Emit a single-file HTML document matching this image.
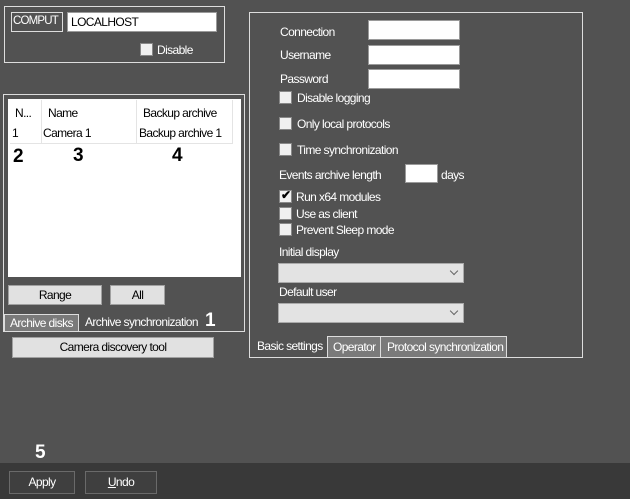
<!DOCTYPE html>
<html><head><meta charset="utf-8"><style>
body{margin:0;width:630px;height:499px;background:#525252;position:relative;overflow:hidden;font-family:"Liberation Sans",sans-serif;font-size:12px;letter-spacing:-0.6px;color:#fff}
div,span{position:absolute;box-sizing:border-box}
.t{white-space:nowrap;line-height:14px}
.k{color:#000}
.btn{background:#e1e1e1;border:1px solid #a0a0a0;color:#000;text-align:center;line-height:18px}
.inp{background:#fff;border:1px solid #9a9a9a}
.cb{width:13px;height:13px;background:#f0f0f0;border:1px solid #888}
.big{font-weight:bold;font-size:19px;letter-spacing:0}
.combo{background:#e3e3e3;border:1px solid #aaa}
.combo:after{content:"";position:absolute;right:6px;top:4px;width:5px;height:5px;border-right:1px solid #666;border-bottom:1px solid #666;transform:rotate(45deg)}
</style></head><body>
<div style="left:4px;top:6px;width:221px;height:57px;border:1px solid #ddd"></div>
<div class="t" style="left:11px;top:12px;width:52px;height:20px;border:1px solid #ddd;line-height:17px;padding-left:1px;font-size:11.5px;letter-spacing:-0.8px">COMPUT</div>
<div class="inp k t" style="left:67px;top:12px;width:150px;height:20px;padding:2px 3px">LOCALHOST</div>
<div class="cb" style="left:140px;top:43px"></div>
<div class="t" style="left:157px;top:43px">Disable</div>

<div style="left:3px;top:94px;width:242px;height:238px;border:1px solid #ddd"></div>
<div style="left:8px;top:99px;width:233px;height:178px;background:#fff"></div>
<div style="left:41px;top:100px;width:1px;height:43px;background:#e4e4e4"></div>
<div style="left:136px;top:100px;width:1px;height:43px;background:#e4e4e4"></div>
<div style="left:232px;top:100px;width:1px;height:43px;background:#e4e4e4"></div>
<div style="left:10px;top:143px;width:223px;height:1px;background:#e4e4e4"></div>
<div class="t k" style="left:15px;top:106px">N...</div>
<div class="t k" style="left:48px;top:106px">Name</div>
<div class="t k" style="left:143px;top:106px">Backup archive</div>
<div class="t k" style="left:12px;top:126px">1</div>
<div class="t k" style="left:43px;top:126px">Camera 1</div>
<div class="t k" style="left:139px;top:126px">Backup archive 1</div>
<div class="t k big" style="left:13px;top:147px;line-height:20px">2</div>
<div class="t k big" style="left:73px;top:146px;line-height:20px">3</div>
<div class="t k big" style="left:172px;top:146px;line-height:20px">4</div>
<div class="btn" style="left:8px;top:285px;width:94px;height:20px">Range</div>
<div class="btn" style="left:110px;top:285px;width:55px;height:20px">All</div>
<div class="t" style="left:4px;top:314px;width:75px;height:18px;background:#7a7a7a;border:1px solid #ddd;line-height:16px;padding-left:5px">Archive disks</div>
<div class="t" style="left:85px;top:315px">Archive synchronization</div>
<div class="t big" style="left:205px;top:311px;line-height:20px">1</div>
<div class="btn" style="left:12px;top:337px;width:202px;height:21px">Camera discovery tool</div>

<div style="left:249px;top:12px;width:334px;height:346px;border:1px solid #ddd"></div>
<div class="t" style="left:280px;top:25px">Connection</div>
<div class="inp" style="left:368px;top:20px;width:92px;height:20px"></div>
<div class="t" style="left:280px;top:48px">Username</div>
<div class="inp" style="left:368px;top:45px;width:92px;height:20px"></div>
<div class="t" style="left:280px;top:72px">Password</div>
<div class="inp" style="left:368px;top:69px;width:92px;height:20px"></div>
<div class="cb" style="left:279px;top:91px"></div><div class="t" style="left:297px;top:91px">Disable logging</div>
<div class="cb" style="left:279px;top:117px"></div><div class="t" style="left:297px;top:117px">Only local protocols</div>
<div class="cb" style="left:279px;top:143px"></div><div class="t" style="left:297px;top:143px">Time synchronization</div>
<div class="t" style="left:279px;top:168px">Events archive length</div>
<div class="inp" style="left:405px;top:164px;width:33px;height:19px"></div>
<div class="t" style="left:441px;top:168px">days</div>
<div class="cb" style="left:279px;top:190px"><span class="k" style="left:1px;top:-3px;font-size:12px;font-weight:bold">✔</span></div><div class="t" style="left:296px;top:190px">Run x64 modules</div>
<div class="cb" style="left:279px;top:207px"></div><div class="t" style="left:296px;top:207px">Use as client</div>
<div class="cb" style="left:279px;top:223px"></div><div class="t" style="left:296px;top:223px">Prevent Sleep mode</div>
<div class="t" style="left:279px;top:245px">Initial display</div>
<div class="combo" style="left:278px;top:263px;width:186px;height:20px"></div>
<div class="t" style="left:279px;top:285px">Default user</div>
<div class="combo" style="left:278px;top:303px;width:186px;height:20px"></div>
<div class="t" style="left:257px;top:339px">Basic settings</div>
<div class="t" style="left:327px;top:336px;width:54px;height:22px;background:#7a7a7a;border:1px solid #ddd;line-height:20px;padding-left:5px">Operator</div>
<div class="t" style="left:380px;top:336px;width:127px;height:22px;background:#7a7a7a;border:1px solid #ddd;line-height:20px;padding-left:6px">Protocol synchronization</div>

<div style="left:0;top:463px;width:630px;height:36px;background:#393939"></div>
<div class="t big" style="left:35px;top:443px;line-height:20px">5</div>
<div class="t" style="left:9px;top:471px;width:66px;height:23px;border:1px solid #6a6a6a;background:#3f3f3f;text-align:center;line-height:21px">Apply</div>
<div class="t" style="left:85px;top:471px;width:72px;height:23px;border:1px solid #6a6a6a;background:#3f3f3f;text-align:center;line-height:21px"><u>U</u>ndo</div>
</body></html>
